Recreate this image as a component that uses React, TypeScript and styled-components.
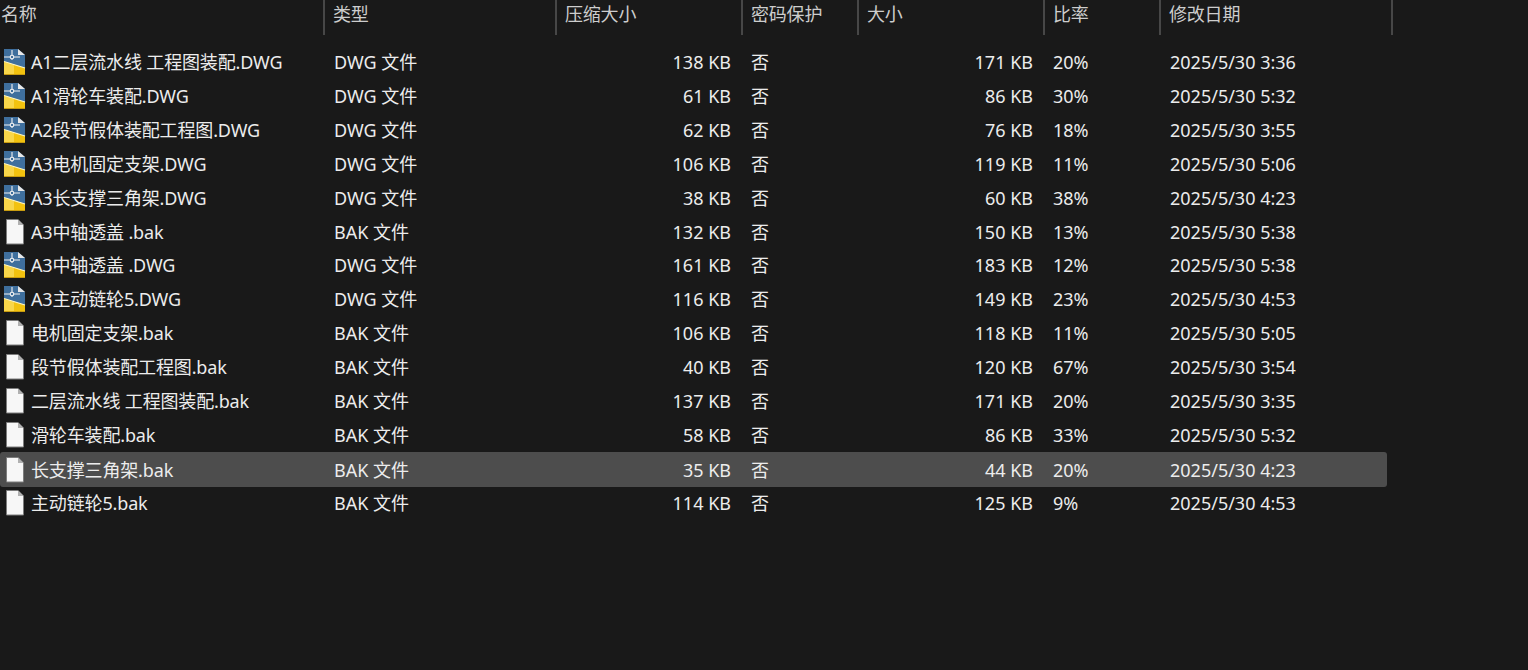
import React from 'react';
import styled, { createGlobalStyle } from 'styled-components';

const GRID_COLUMNS = '325px 232px 186px 116px 186px 116px 232px';

const GlobalStyle = createGlobalStyle`
  html, body {
    margin: 0;
    padding: 0;
    background: #191919;
  }
  body {
    font-family: "Noto Sans", "Noto Sans CJK SC", sans-serif;
    overflow: hidden;
  }
`;

const Page = styled.div`
  width: 1528px;
  height: 670px;
  background: #191919;
  color: #ececec;
  font-size: 18px;
`;

const HeaderRow = styled.div`
  display: grid;
  grid-template-columns: ${GRID_COLUMNS};
  height: 35px;
  margin-bottom: 10px;
`;

const HeaderCell = styled.div<{ $first?: boolean }>`
  box-sizing: border-box;
  height: 35px;
  padding: 0 0 9px ${(p) => (p.$first ? 1 : 8)}px;
  border-right: 2px solid #474747;
  display: flex;
  align-items: center;
  color: #cdcdcd;
  font-size: 18px;
  letter-spacing: -0.2px;
  white-space: nowrap;
`;

const FileList = styled.div`
  display: flex;
  flex-direction: column;
`;

const Row = styled.div<{ $selected?: boolean }>`
  display: grid;
  grid-template-columns: ${GRID_COLUMNS};
  width: 1387px;
  height: ${(p) => (p.$selected ? '34.93px' : '33.93px')};
  margin-bottom: ${(p) => (p.$selected ? '-1px' : '0')};
  align-items: center;
  line-height: 24px;
  border-radius: 3px;
  background: ${(p) => (p.$selected ? '#4d4d4d' : 'transparent')};
`;

const NameCell = styled.div`
  display: flex;
  align-items: center;
  gap: 5px;
  padding-left: 3px;
  letter-spacing: -0.15px;
  white-space: nowrap;
`;

const Cell = styled.div<{ $right?: boolean; $inset?: number }>`
  box-sizing: border-box;
  padding: ${(p) => (p.$right ? '0 12px 0 0' : `0 0 0 ${p.$inset ?? 9}px`)};
  text-align: ${(p) => (p.$right ? 'right' : 'left')};
  white-space: nowrap;
`;

const IconBox = styled.svg`
  flex: none;
  width: 23px;
  height: 26px;
`;

const DwgIcon = () => (
  <IconBox viewBox="0 0 23 26">
    <path d="M1 0h14l7 6v20H1z" fill="#3f6f9d" />
    <path d="M1 12.500l21 6.500V26H1z" fill="#f2c20f" />
    <path d="M1 13l10 3.200V25H1z" fill="#f8d64a" />
    <path d="M1 12.500l21 6.500" stroke="#fff6c4" strokeWidth="1.300" fill="none" />
    <path d="M1 8h16M9 1v10" stroke="#f2f2f2" strokeWidth="1.100" fill="none" />
    <circle cx="9" cy="8" r="1.800" fill="#3f6f9d" stroke="#f2f2f2" strokeWidth="1.100" />
    <path d="M15 0l7 6h-7z" fill="#e8e8e8" />
    <path d="M1 25h21v1H1z" fill="#c89c10" />
  </IconBox>
);

const BlankIcon = () => (
  <IconBox viewBox="0 0 23 26">
    <path d="M3.500 .5h11.500l5.500 5.500v19H3.500z" fill="#f7f7f7" stroke="#7d7d7d" strokeWidth="1" />
    <path d="M15 .5l5.500 5.500H15z" fill="#b0b0b0" />
  </IconBox>
);

type FileRow = {
  name: string;
  kind: 'DWG' | 'BAK';
  packed: string;
  size: string;
  ratio: string;
  date: string;
};

const files: FileRow[] = [
  { name: 'A1二层流水线 工程图装配.DWG', kind: 'DWG', packed: '138 KB', size: '171 KB', ratio: '20%', date: '2025/5/30 3:36' },
  { name: 'A1滑轮车装配.DWG', kind: 'DWG', packed: '61 KB', size: '86 KB', ratio: '30%', date: '2025/5/30 5:32' },
  { name: 'A2段节假体装配工程图.DWG', kind: 'DWG', packed: '62 KB', size: '76 KB', ratio: '18%', date: '2025/5/30 3:55' },
  { name: 'A3电机固定支架.DWG', kind: 'DWG', packed: '106 KB', size: '119 KB', ratio: '11%', date: '2025/5/30 5:06' },
  { name: 'A3长支撑三角架.DWG', kind: 'DWG', packed: '38 KB', size: '60 KB', ratio: '38%', date: '2025/5/30 4:23' },
  { name: 'A3中轴透盖 .bak', kind: 'BAK', packed: '132 KB', size: '150 KB', ratio: '13%', date: '2025/5/30 5:38' },
  { name: 'A3中轴透盖 .DWG', kind: 'DWG', packed: '161 KB', size: '183 KB', ratio: '12%', date: '2025/5/30 5:38' },
  { name: 'A3主动链轮5.DWG', kind: 'DWG', packed: '116 KB', size: '149 KB', ratio: '23%', date: '2025/5/30 4:53' },
  { name: '电机固定支架.bak', kind: 'BAK', packed: '106 KB', size: '118 KB', ratio: '11%', date: '2025/5/30 5:05' },
  { name: '段节假体装配工程图.bak', kind: 'BAK', packed: '40 KB', size: '120 KB', ratio: '67%', date: '2025/5/30 3:54' },
  { name: '二层流水线 工程图装配.bak', kind: 'BAK', packed: '137 KB', size: '171 KB', ratio: '20%', date: '2025/5/30 3:35' },
  { name: '滑轮车装配.bak', kind: 'BAK', packed: '58 KB', size: '86 KB', ratio: '33%', date: '2025/5/30 5:32' },
  { name: '长支撑三角架.bak', kind: 'BAK', packed: '35 KB', size: '44 KB', ratio: '20%', date: '2025/5/30 4:23' },
  { name: '主动链轮5.bak', kind: 'BAK', packed: '114 KB', size: '125 KB', ratio: '9%', date: '2025/5/30 4:53' },
];

const headers = ['名称', '类型', '压缩大小', '密码保护', '大小', '比率', '修改日期'];

export default function App() {
  return (
    <Page>
      <GlobalStyle />
      <HeaderRow>
        {headers.map((h, i) => (
          <HeaderCell key={h} $first={i === 0}>{h}</HeaderCell>
        ))}
      </HeaderRow>
      <FileList>
        {files.map((f, i) => (
          <Row key={f.name} $selected={i === 12}>
            <NameCell>
              {f.kind === 'DWG' ? <DwgIcon /> : <BlankIcon />}
              {f.name}
            </NameCell>
            <Cell>{f.kind} 文件</Cell>
            <Cell $right>{f.packed}</Cell>
            <Cell $inset={8}>否</Cell>
            <Cell $right>{f.size}</Cell>
            <Cell $inset={8}>{f.ratio}</Cell>
            <Cell>{f.date}</Cell>
          </Row>
        ))}
      </FileList>
    </Page>
  );
}
